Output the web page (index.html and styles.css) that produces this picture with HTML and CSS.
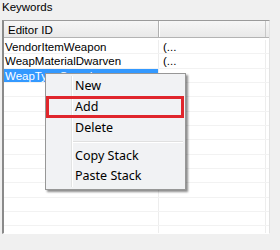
FILE: index.html
```html
<!DOCTYPE html>
<html lang="en">
<head>
    <meta charset="utf-8">
    <title>Keywords</title>
<link rel="stylesheet" href="styles.css">
</head>
<body>
<div class="label">Keywords</div>
<div class="list">
  <div class="head">
    <div class="hc c1">Editor ID</div>
    <div class="hc c2"></div>
  </div>
  <div class="rows">
    <div class="row"><div class="c1">VendorItemWeapon</div><div class="c2">(...</div></div>
    <div class="row"><div class="c1">WeapMaterialDwarven</div><div class="c2">(...</div></div>
    <div class="row sel"><div class="c1">WeapTypeSword</div><div class="c2"></div></div>
    <div class="row"><div class="c1"></div><div class="c2"></div></div>
    <div class="row"><div class="c1"></div><div class="c2"></div></div>
    <div class="row"><div class="c1"></div><div class="c2"></div></div>
    <div class="row"><div class="c1"></div><div class="c2"></div></div>
    <div class="row"><div class="c1"></div><div class="c2"></div></div>
    <div class="row"><div class="c1"></div><div class="c2"></div></div>
    <div class="row"><div class="c1"></div><div class="c2"></div></div>
    <div class="row"><div class="c1"></div><div class="c2"></div></div>
    <div class="row"><div class="c1"></div><div class="c2"></div></div>
    <div class="row"><div class="c1"></div><div class="c2"></div></div>
    <div class="row"><div class="c1"></div><div class="c2"></div></div>
  </div>
</div>
<div class="menu">
  <div class="item">New</div>
  <div class="item mark">Add</div>
  <div class="item">Delete</div>
  <div class="sep"></div>
  <div class="item">Copy Stack</div>
  <div class="item">Paste Stack</div>
</div>
</body>
</html>
```

FILE: styles.css
```css
body {margin: 0; width: 280px; height: 250px; overflow: hidden; position: relative;
      background: #f0f0f0; color: #000;
      font-family: "Liberation Sans", Arial, sans-serif; font-size: 11.5px;}
.label {height: 20px; line-height: 15px; padding-left: 2px;}

.list {margin-left: 2px; width: 268px; height: 214px; box-sizing: border-box; overflow: hidden;
       background: #fff; border-top: 1px solid #9a9a9a; border-left: 2px solid #8a8a8a;
       border-right: 1px solid #e2e2e2; border-bottom: 1px solid #fff;}
.head {display: flex; height: 17px; box-sizing: border-box;
       background: linear-gradient(#f6f6f6, #e9e9e9); border-bottom: 1px solid #b3b3b3;}
.hc {line-height: 18px;}
.head .c1 {padding-left: 4px; border-right: 1px solid #b0b0b0; box-shadow: 1px 0 0 #fff;}
.head .c2 {border-right: 1px solid #c8c8c8;}
.c1 {width: 155px; box-sizing: border-box; flex: none; white-space: nowrap; overflow: hidden;}
.c2 {width: 107px; box-sizing: border-box; flex: none; padding-left: 4px; white-space: nowrap;}

.rows {padding-top: 2px;}
.row {display: flex; height: 14.33px; box-sizing: border-box; border-bottom: 1px solid #f2f2f2;}
.row div {line-height: 14px;}
.row .c1 {padding-left: 1px; border-right: 1px solid #ededed;}
.row .c2 {border-right: 1px solid #ededed;}
.sel .c1 {background: #3399ff; color: #fff;}

.menu {position: absolute; left: 45px; top: 73px; width: 141px; height: 117px; box-sizing: border-box;
       padding-top: 2px; background: #f1f2f4; border: 1px solid #979797;
       box-shadow: 2px 2px 2px rgba(0, 0, 0, 0.45);
       font-family: "Noto Sans", "Open Sans", sans-serif; font-size: 12.5px;}
.menu::before {content: ""; position: absolute; left: 25px; top: 2px; bottom: 2px; width: 1px;
               background: #e2e3e3; border-right: 1px solid #fff;}
.item {position: relative; height: 20px; line-height: 20px; padding-left: 29px; box-sizing: border-box;}
.item.mark {height: 22px; line-height: 16px; padding-left: 26px; margin-right: 1px;
            border: 3px solid #e0262c;}
.sep {height: 8px; position: relative;}
.sep::after {content: ""; position: absolute; left: 27px; right: 2px; top: 3px; height: 1px;
             background: #e0e0e0; border-bottom: 1px solid #fff;}
```
